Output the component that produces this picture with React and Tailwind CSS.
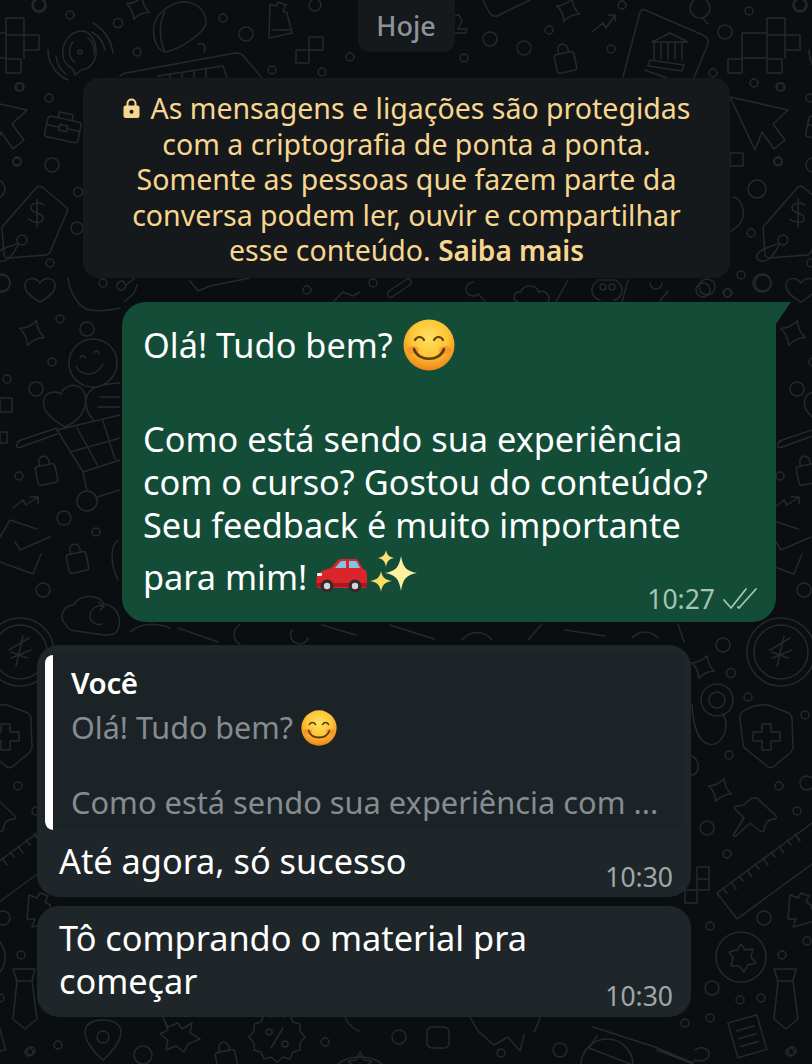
const F = "font-['Noto_Sans',sans-serif]";

// [cx, cy, r] of the small rings in the wallpaper
const RINGS = [
  [39,5,7],[70,15,4],[118,23,4.5],[246,34,7],[137,52,4],[223,18,4],[315,5,6],[350,57,4],[272,70,4],[322,72,4],
  [20,87,4],[49,98,4],[17,162,4],[52,165,7],[78,192,4.5],[77,228,6],[50,263,4],[103,283,4],[307,290,4],[373,283,4],
  [60,319,4],[87,329,7],[52,362,4],[7,379,4],[36,389,7],[19,476,4],[64,518,7],[96,532,4],[43,590,7],
  [703,290,7],[728,293,4],[763,283,8],[723,645,7],[731,673,4.5],[748,697,4],[805,715,4],[729,755,4],[779,786,4],[807,783,7],
  [707,828,7],[797,811,4],[727,854,4],[710,926,4],[764,918,7],[782,955,4],[807,941,4],[712,988,7],[740,1000,4],[761,998,4],
  [710,1018,4],[685,1023,4],[792,1051,4],[560,1050,7],[501,1053,4],[399,1037,7],[325,1042,4],[143,1055,9],[58,1045,4],[29,1052,4],
  [622,5,4],[549,30,4],[490,39,7],[524,48,7],[464,58,4],[611,49,4],[725,32,7],[749,11,4],[800,5,6],[713,73,4],
  [754,83,4],[780,87,4],[778,161,4],[757,189,9],[751,233,4],[741,275,4],[762,283,9],[727,293,4],[707,287,8],
];

function Star({ x, y, r = 12 }) {
  const k = r * 0.3;
  return <path d={`M${x} ${y-r}Q${x+k} ${y-k} ${x+r} ${y}Q${x+k} ${y+k} ${x} ${y+r}Q${x-k} ${y+k} ${x-r} ${y}Q${x-k} ${y-k} ${x} ${y-r}z`} transform={`rotate(20 ${x} ${y})`} />;
}

function Padlock({ x, y }) {
  return (
    <g transform={`rotate(-12 ${x} ${y})`}>
      <rect x={x-10} y={y-7} width="20" height="19" rx="3" />
      <path d={`M${x-5} ${y-7}v-4a5 5 0 0 1 10 0v4`} />
    </g>
  );
}

function Tiled() {
  return (
    <g>
      {RINGS.map(([x, y, r], i) => <circle key={i} cx={x} cy={y} r={r} />)}
      {/* top left: sound bubble, taco, star, eraser */}
      <path d="M80 31c-12 2-19 14-17 25 1 7 6 11 10 13l2 6 6-5c10-1 16-10 15-21-1-11-8-19-16-18zM73 42c-5 6-5 16 2 20M88 38c5 4 7 10 6 16" />
      <circle cx="80" cy="52" r="2" />
      <path d="M48 50c0 13 8 25 20 30M56 56c1 8 4 14 10 18M93 23c10 6 18 16 20 30M92 32c7 4 11 10 13 18" />
      <path d="M165 52c-8-2-13-14-11-26 2-12 14-22 28-24 10-1 18 4 22 12 3 6 3 10 0 14-6 8-20 18-32 22-3 1-5 2-7 2zM165 12c-5 8-7 22-1 38M198 44c6-2 8 2 6 8" />
      <Star x={138} y={8} r={12} />
      <path d="M270 4l6 2 2-4 8 3-3 6 4 2 5 20-23 5zM273 30h16" />
      <path d="M296 50h13v13h-13zM309 37h14v13h-14z" />
      <path d="M120 76c2-2 4-3 6-3l109-20c4 0 8 1 10 5l17 20M158 76l65-10 4 12M170 74v4M182 72v6M194 70v8M206 68v10" />
      {/* left column: cursor, briefcase, tag, heart */}
      <path d="M-31 97l58 13-15 14 12 16-11 9-12-17-7 18z" />
      <g transform="rotate(12 63 129)">
        <rect x="46" y="119" width="34" height="21" rx="3" />
        <path d="M56 119v-6h14v6M46 128h13M67 128h13M59 125h8v6h-8z" />
      </g>
      <path d="M37 187c2-1 3-1 5 0l24 20c2 2 2 3 1 5L50 252c-1 2-2 3-4 3l-38 3c-2 0-3-1-4-3l-2-28zM37 199v28M44 205c-3-3-13-3-13 3s12 4 12 10-10 5-14 1" />
      <circle cx="22" cy="240" r="5" />
      <path d="M18 243c-6 4-18 4-22 12-2 6 6 8 12 4 4-3 8-10 10-14" />
      <path d="M40 302c-10-6-16-11-15-18 1-6 10-8 15-1 5-7 14-5 15 1 1 7-5 12-15 18z" />
      <path d="M68 278c2 14 10 30 22 32 12 2 22 0 30-2" />
      {/* star, smiley, heart, glove, cart */}
      <Star x={32} y={333} r={13} />
      <circle cx="93" cy="363" r="24" />
      <path d="M80 358c1-3 4-3 5 0M94 353c1-3 4-3 5 0M76 366c5 10 20 12 27-2" />
      <path d="M65 427c-14-8-24-18-21-28 2-7 12-9 17-5 2-7 12-12 20-6 5 4 6 14 3 21-3 8-10 14-19 18z" />
      <path d="M120 383c-12 1-28 2-33 12-3 8 0 20 8 26M100 397h20M98 407h22" fill="#0b0e11" />
      <path d="M57 430l63-15M57 430l26 42 37-12M70 452l50-14M77 428l21 38M103 421l12 38" />
      <path d="M21 447l36-13M21 447c-4 2-5-1-4-3 0-2 2-3 4-4l36-12" />
      <path d="M83 472l4 19" />
      <circle cx="87" cy="501" r="10" />
      <path d="M97 497l23-7" />
      <path d="M0 398h12v14h-12zM0 432h7v11h-7z" />
      <Padlock x={46} y={472} />
      <path d="M13 508l10-8 3 5 12-8M30 497h8v7" />
      <path d="M0 537l10-17 27 9M15 542l5 8 30-13M0 562l33 12 8-20" />
      <Padlock x={77} y={560} />
      <path d="M66 625c-8-8-3-20 8-20 3-10 24-12 30-1 14 2 18 16 14 25-2 6-8 6-14 6l-28-4c-4 0-8-2-10-6zM104 606c-8-2-14 4-14 10s6 10 12 8M98 602l6 4-4 4" />
      <path d="M118 540c-8 6-8 24 0 40" />
      {/* top middle and right */}
      <path d="M483 0l6 12c2 3 5 5 8 4l33-16M450 17l9-2 3 6-4 8h9l-1 4h-17z" />
      <Star x={568} y={10} r={12} />
      <path d="M592 32l11-9 3 5 9-13M608 15h7v6" />
      <Padlock x={565} y={60} />
      <circle cx="700" cy="8" r="10" />
      <path d="M703 18l5 6" />
      <path d="M645 10c-2-1-4 0-5 2l-17 65M645 10l58 25c4 2 6 5 5 9l-15 36" />
      <path d="M652 42l18-9 18 9zM654 42v17M661 42v17M668 42v17M675 42v17M682 42v17M650 60l34 5-2 6-34-5zM645 70l22 8" />
      <path d="M767 18h18v17h-18zM742 33h25v25h-25zM785 35h15v15h-15zM728 59h14v14h-14zM767 59h15v14h-15zM767 35h18v23" />
      <path d="M733 197c10 2 14 18 6 28l-9 7" />
      <rect x="730" y="153" width="13" height="13" />
      {/* strip above the green bubble */}
      <path d="M392 297c-4 1-6-3-3-6l18-12c3-1 6 3 3 6zM473 282a7 7 0 1 0 5 12l7 7M518 302c-6-2-5-11 3-10 2-8 15-8 18 0 8-3 12 6 9 10" />
      <path d="M568 280l-12 22M600 300c-8-2-10-10-6-16l4-4h18l4 4c4 6 2 14-6 16M628 280l-6 22M650 283a6 6 0 1 0 12 0M668 291l-8 10" />
      <circle cx="603" cy="287" r="3" /><circle cx="612" cy="287" r="3" />
      <path d="M190 281l8 10 12-5 40-8M123 281c-5 0-8 4-5 8 3 3 8 0 8-4zM126 285l8-6M333 302l10-10 10 4 7-4" />
      <path d="M137 285c-1 7-6 12-12 16" />
      {/* strip below the green bubble */}
      <path d="M130 632c10-8 24-10 40-4M178 628l40 14M240 624c-8 6-8 16 0 20M292 630a9 9 0 1 0 16 8M322 625l34 10M390 625l44 14M462 640c8-10 22-10 30 0M528 640l14-16M565 630l40 6M632 638c8-8 18-8 26 0M678 624l6 18" />
      {/* right column: coin, stethoscope, shield, pin, ruler */}
      <circle cx="781" cy="652" r="34" />
      <circle cx="781" cy="652" r="27" />
      <path d="M784 636l-7 30M770 650l20-12M772 658l20-8M772 652l16 6" />
      <Star x={703} y={667} r={12} />
      <circle cx="717" cy="700" r="16" />
      <circle cx="717" cy="700" r="8" />
      <path d="M692 705c1 20 6 36 16 39 10 3 18-8 18-20 0-5-2-7-3-10" />
      <path d="M768 705c-10-1-20 3-26 7-2 2-2 4-2 6l3 26c0 2 1 4 3 5l22 18c2 1 3 1 5 0l17-14c2-2 3-4 3-6l-1-28c0-3-1-4-3-6zM762 724l9 0 0 8 9 0 0 9-9 0 0 9-9 0 0-9-9 0 0-9 9 0z" />
      <path d="M691 756c7 2 10 12 4 18-1 1-3 1-4 1" />
      <Star x={720} y={790} r={12} />
      <path d="M757 798l19 18c1 2 0 3-2 3-3 0-5 1-7 3-2 2-2 5-3 8-1 2-3 2-4 1l-10-8-14 13c-2 1-3-1-2-2l10-16-9-9c-1-2 0-3 2-3 4 0 6 0 9-3 3-3 5-5 7-5z" />
      <path d="M717 893l95-70M737 919l75-55M717 893l20 26" />
      <path d="M723 888l4 5M731 882l5 7M739 876l4 5M747 870l5 7M755 864l4 5M763 858l5 7M771 852l4 5M779 846l5 7M787 840l4 5M795 834l5 7" />
      <path d="M697 867h12v23h-12zM685 890h12v13h-12zM697 879h12" />
      <path d="M790 895l8 3 3-5 8 3-3 6 5 3 4 16-22 6 3-8h-8z" />
      {/* coin with star, tie, notepad */}
      <circle cx="741" cy="957" r="25" />
      <path d="M741 944l4 6 8-1-2 8 5 6-8 2-4 7-5-6-8 0 2-8-4-6 8-2z" />
      <path d="M774 969h22l-3 12 5 38-12 10-12-10 4-38zM777 981h16" />
      <g transform="rotate(-16 748 1035)">
        <rect x="732" y="1018" width="30" height="36" />
        <path d="M738 1028h18M738 1036h18M738 1044h18" />
      </g>
      {/* bottom strip */}
      <path d="M593 1027l62 20 38 16M597 1036l-8 12 62 24M657 1050l36 14" />
      <circle cx="607" cy="1065" r="26" />
      <path d="M695 1050c6-4 14-2 14 4 0 6-8 8-14 6l-8 10" />
      <path d="M103 1060c-10-8-18-20-18-28 0-8 8-12 18-12s18 4 18 12c0 8-8 20-18 28z" />
      <circle cx="103" cy="1037" r="6" />
      <path d="M163 1017l5 10 10-4 4 6 10-6-2 10 10 6-12 5-4 8-8-6-10 4 2-10-8-6 8-4z" />
      <path d="M277 1012l6 5 7-2 3 7 7 2 0 7 5 6-5 6 0 7-7 2-3 7-7-2-6 5-6-5-7 2-3-7-7-2 0-7-5-6 5-6 0-7 7-2 3-7 7 2zM271 1048l12-20" />
      <circle cx="269" cy="1032" r="3" /><circle cx="285" cy="1044" r="3" />
      <Padlock x={226} y={1058} />
      <path d="M332 1075c2-12 14-18 28-18 14 0 26 6 28 18M360 1052l4 8 8 1-6 6 2 8-8-4-8 4 2-8-6-6 8-1z" />
      <path d="M345 1017c2 6 8 12 14 14" />
      <rect x="427" y="1027" width="22" height="21" rx="5" />
      <path d="M470 1017l8 14 16 14 14-8 12 14 4-16M540 1018c-2 6-4 10-6 14" />
    </g>
  );
}

function Wallpaper() {
  return (
    <svg className="absolute inset-0" width="812" height="1064" viewBox="0 0 812 1064" fill="none" stroke="#26292c" strokeWidth="1.5" strokeLinecap="round" strokeLinejoin="round">
      <Tiled />
      <g transform="translate(-761 0)"><Tiled /></g>
      <g transform="translate(761 0)"><Tiled /></g>
    </svg>
  );
}

function SmileEmoji({ size, id }) {
  return (
    <svg width={size} height={size} viewBox="0 0 52 52" className="inline-block shrink-0">
      <defs>
        <radialGradient id={id} cx="50%" cy="36%" r="66%">
          <stop offset="0%" stopColor="#ffe25f" />
          <stop offset="55%" stopColor="#fdc535" />
          <stop offset="100%" stopColor="#ee7f16" />
        </radialGradient>
      </defs>
      <circle cx="26" cy="26" r="25.5" fill={`url(#${id})`} />
      <ellipse cx="10" cy="31" rx="6" ry="4" fill="#f4762d" opacity="0.5" />
      <ellipse cx="42" cy="31" rx="6" ry="4" fill="#f4762d" opacity="0.5" />
      <path d="M12 21c2-4 7-4 9 0M31 21c2-4 7-4 9 0" stroke="#5f3c12" strokeWidth="2.2" fill="none" strokeLinecap="round" />
      <path d="M11 30c4 13 26 13 30 0" stroke="#5f3c12" strokeWidth="2.6" fill="none" strokeLinecap="round" />
    </svg>
  );
}

function CarEmoji() {
  return (
    <svg width="52" height="36" viewBox="0 0 52 36" className="inline-block shrink-0">
      <path d="M1 18c0-3 6-6 14-8l7-8c1-1 2-1 4-1h14c1 0 2 1 3 3l4 7c3 1 4 3 4 7v9c0 2-1 3-3 3H3c-2 0-3-1-3-3z" fill="#d9252b" />
      <path d="M19 10l5-6c1-1 1-1 3-1h3v7zM33 3h6c1 0 2 0 2 1l3 6H33z" fill="#7fc4e4" />
      <path d="M0 25h51v4H0z" fill="#a91a20" />
      <rect x="1" y="15" width="5" height="3" rx="1" fill="#f7efe0" />
      <circle cx="11" cy="28" r="6.5" fill="#35292b" />
      <circle cx="11" cy="28" r="3.2" fill="#d5d6d8" />
      <circle cx="39" cy="28" r="6.5" fill="#35292b" />
      <circle cx="39" cy="28" r="3.2" fill="#d5d6d8" />
    </svg>
  );
}

function SparklesEmoji() {
  return (
    <svg width="48" height="48" viewBox="0 0 48 48" className="inline-block shrink-0">
      <path d="M31 7c2 11 5 15 16 17-11 2-14 6-16 18-2-12-5-16-16-18 11-2 14-6 16-17z" fill="#fdf0a0" />
      <path d="M16 1c1 5 3 7 8 8-5 1-7 3-8 9-1-6-3-8-8-9 5-1 7-3 8-8z" fill="#fbe17a" />
      <path d="M11 22c1 6 4 9 11 10-7 1-10 4-11 11-1-7-4-10-11-11 7-1 10-4 11-10z" fill="#fbdc62" />
    </svg>
  );
}

function LockIcon() {
  return (
    <svg width="17" height="21" viewBox="0 0 17 21" className="inline-block shrink-0">
      <path d="M4.5 8V5.5a4 4 0 0 1 8 0V8" stroke="#f7d78f" strokeWidth="2" fill="none" />
      <rect x="0.5" y="7.5" width="16" height="12.5" rx="2.2" fill="#f7d78f" />
      <circle cx="8.5" cy="13.8" r="2" fill="#16191c" />
    </svg>
  );
}

function DoubleCheck() {
  return (
    <svg width="36" height="24" viewBox="0 0 36 24" fill="none" stroke="#a6c4b6" strokeWidth="1.8" strokeLinecap="round" strokeLinejoin="round">
      <path d="M2 13l7 8L24 2M16 20l1 1L34 2" />
    </svg>
  );
}

export default function App() {
  return (
    <div className={`${F} relative w-[812px] h-[1064px] overflow-hidden bg-[#0b0e11]`}>
      <Wallpaper />
      <div className="relative flex flex-col">
        <div className="flex justify-center h-[52px]">
          <div className="w-[97px] rounded-b-xl bg-[#16191c] text-[#8d9499] font-medium text-[27px] leading-[52px] text-center">Hoje</div>
        </div>

        <div className="mt-[26px] ml-[83px] w-[647px] h-[200px] pt-[13px] rounded-2xl bg-[#16191c] text-[#f7d78f] text-[28.5px] leading-[35.5px] text-center">
          <div className="flex items-center justify-center gap-[11px] whitespace-nowrap">
            <LockIcon />
            <span>As mensagens e ligações são protegidas</span>
          </div>
          <div>com a criptografia de ponta a ponta.</div>
          <div>Somente as pessoas que fazem parte da</div>
          <div>conversa podem ler, ouvir e compartilhar</div>
          <div>esse conteúdo. <span className="font-semibold text-[28px]">Saiba mais</span></div>
        </div>

        <div className="relative mt-[24px] ml-[122px] w-[654px] h-[320px] rounded-b-[24px] rounded-tl-[24px] bg-[#134d37] pl-[21px] pt-[18px] text-white text-[34.3px]">
          <div className="absolute -right-[15px] top-0 w-0 h-0 border-t-[22px] border-r-[15px] border-t-[#134d37] border-r-transparent" />
          <div className="flex items-center h-[50px] gap-[10px] leading-[50px]">
            <span>Olá! Tudo bem?</span>
            <SmileEmoji size={52} id="smile-big" />
          </div>
          <div className="mt-[47px] leading-[43px]">
            <div>Como está sendo sua experiência</div>
            <div>com o curso? Gostou do conteúdo?</div>
            <div>Seu feedback é muito importante</div>
            <div className="flex items-center h-[50px] mt-[5px] gap-[9px]">
              <span>para mim!</span>
              <span className="flex items-center">
                <CarEmoji />
                <span className="-mt-[8px] ml-[2px]"><SparklesEmoji /></span>
              </span>
            </div>
          </div>
          <div className="absolute right-[18px] bottom-[8px] flex items-center gap-[7px] text-[26.5px] leading-[30px] text-[#a6c4b6]">
            <span>10:27</span>
            <DoubleCheck />
          </div>
        </div>

        <div className="relative mt-[23px] ml-[37px] w-[654px] h-[252px] rounded-[22px] bg-[#1f2629] p-[8px] text-white">
          <div className="flex h-[177px] w-[638px] rounded-[8px] overflow-hidden bg-[#1c2327]">
            <div className="w-[8px] h-[175px] mt-[2px] rounded-l-[10px] bg-white" />
            <div className="pl-[18px] pt-[13px] min-w-0">
              <div className="font-semibold text-[29.5px] leading-[34px] tracking-[-0.4px]">Você</div>
              <div className="flex items-center gap-[8px] h-[44px] mt-[6px] text-[30.5px] text-[#858c92]">
                <span>Olá! Tudo bem?</span>
                <SmileEmoji size={36} id="smile-small" />
              </div>
              <div className="mt-[32px] text-[30.8px] leading-[40px] text-[#858c92] whitespace-nowrap">Como está sendo sua experiência com ...</div>
            </div>
          </div>
          <div className="pl-[14px] mt-[8px] text-[34.3px] leading-[46px]">Até agora, só sucesso</div>
          <div className="absolute right-[18px] bottom-[5px] text-[26.5px] leading-[30px] text-[#a1a6aa]">10:30</div>
        </div>

        <div className="relative mt-[9px] ml-[37px] w-[654px] h-[111px] rounded-[22px] bg-[#1f2629] pl-[22px] pt-[10px] text-white text-[34.3px] leading-[43px]">
          <div>Tô comprando o material pra</div>
          <div>começar</div>
          <div className="absolute right-[18px] bottom-[6px] text-[26.5px] leading-[30px] text-[#a1a6aa]">10:30</div>
        </div>
      </div>
    </div>
  );
}
